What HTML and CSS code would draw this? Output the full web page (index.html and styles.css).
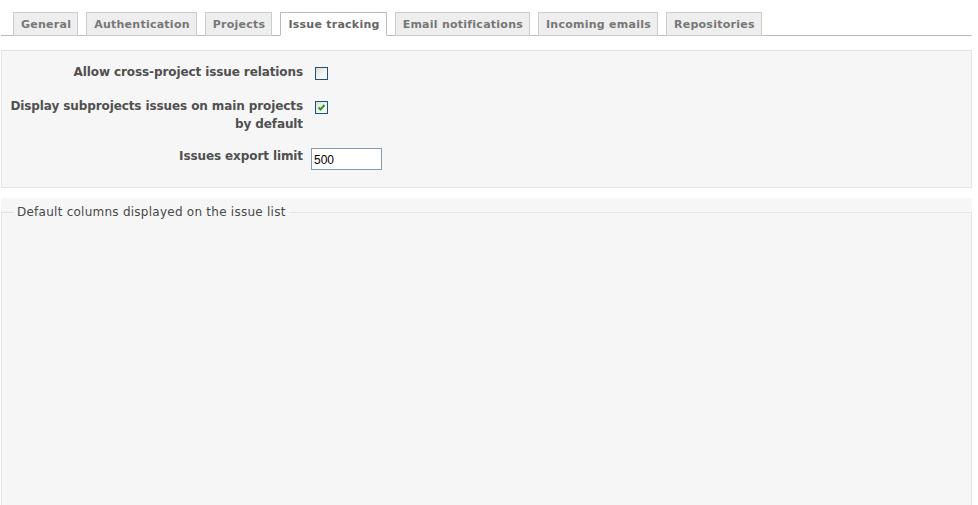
FILE: index.html
```html
<!DOCTYPE html>
<html>
<head>
<meta charset="utf-8">
<link rel="stylesheet" href="styles.css">
</head>
<body>
<div class="page">
  <div class="tabs">
    <ul class="tab-list">
      <li class="tab">General</li>
      <li class="tab">Authentication</li>
      <li class="tab">Projects</li>
      <li class="tab selected">Issue tracking</li>
      <li class="tab">Email notifications</li>
      <li class="tab">Incoming emails</li>
      <li class="tab">Repositories</li>
    </ul>
  </div>

  <div class="box">
    <div class="row">
      <label class="label">Allow cross-project issue relations</label>
      <div class="control"><span class="cb"></span></div>
    </div>
    <div class="row">
      <label class="label">Display subprojects issues on main projects<br>by default</label>
      <div class="control"><span class="cb cb-checked"><svg width="11" height="11" viewBox="0 0 11 11"><path d="M2.5 5.5 L4.5 7.5 L8.5 3" fill="none" stroke="#21a121" stroke-width="2"/></svg></span></div>
    </div>
    <div class="row row-input">
      <label class="label">Issues export limit</label>
      <div class="control"><input class="text-input" type="text" value="500"></div>
    </div>
  </div>

  <div class="fs-wrap">
    <fieldset class="fs">
      <legend class="legend">Default columns displayed on the issue list</legend>
    </fieldset>
  </div>
</div>
</body>
</html>
```
FILE: styles.css
```css
html, body {
  margin: 0;
  padding: 0;
  background: #fff;
}
.page {
  margin-left: 1px;
  width: 971px;
  font-family: "DejaVu Sans", Verdana, sans-serif;
  font-size: 11px;
}
.tabs {
  height: 35px;
  border-bottom: 1px solid #bbb;
  display: flex;
  align-items: flex-end;
}
.tab-list {
  list-style: none;
  margin: 0 0 -1px 0;
  padding: 0 0 0 12px;
  display: flex;
  gap: 8px;
}
.tab {
  background: #eee;
  border: 1px solid #ccc;
  padding: 4px 6px 3px 7px;
  line-height: 15px;
  color: #777;
  font-weight: bold;
  letter-spacing: 0.25px;
  white-space: nowrap;
}
.tab.selected {
  background: #fff;
  border-color: #bbb;
  border-bottom-color: #fff;
  color: #666;
}
.box {
  margin-top: 14px;
  background: #f6f6f6;
  border: 1px solid #e4e4e4;
  padding: 12px 6px 17px 6px;
  display: flex;
  flex-direction: column;
  gap: 16px;
  color: #505050;
}
.row {
  display: flex;
  align-items: flex-start;
  line-height: 18px;
}
.row-input {
  margin-top: -2px;
}
.label {
  width: 295px;
  text-align: right;
  font-weight: bold;
  font-size: 12px;
  letter-spacing: -0.1px;
  margin-right: 8px;
  flex: none;
}
.control {
  display: flex;
}
.cb {
  display: block;
  box-sizing: border-box;
  width: 13px;
  height: 13px;
  margin: 4px 0 0 4px;
  border: 1px solid #1c5180;
  background: linear-gradient(135deg, #dcdcd7 0%, #f4f4f0 55%, #fff 100%);
}
.cb-checked svg {
  display: block;
}
.text-input {
  box-sizing: border-box;
  width: 71px;
  height: 22px;
  margin: 1px 0 0 0;
  border: 1px solid #7f9db9;
  padding: 2px 2px 0 2px;
  font-family: "Liberation Sans", Arial, sans-serif;
  font-size: 12px;
  color: #000;
  background: #fff;
  outline: none;
}
.fs-wrap {
  margin-top: 10px;
  background: #f6f6f6;
  padding-top: 5px;
}
.fs {
  margin: 0;
  border: 1px solid #e4e4e4;
  padding: 0 12px;
  min-height: 400px;
}
.legend {
  padding: 0 3px;
  line-height: 18px;
  font-size: 12px;
  letter-spacing: 0.25px;
  color: #484848;
}
```
